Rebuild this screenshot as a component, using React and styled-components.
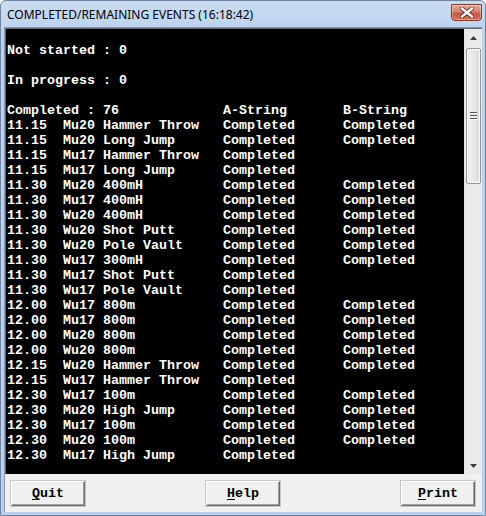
import React from 'react';
import styled, { createGlobalStyle } from 'styled-components';

const rows = [
  ['11.15', 'Mu20 Hammer Throw', 'Completed', 'Completed'],
  ['11.15', 'Mu20 Long Jump', 'Completed', 'Completed'],
  ['11.15', 'Mu17 Hammer Throw', 'Completed', ''],
  ['11.15', 'Mu17 Long Jump', 'Completed', ''],
  ['11.30', 'Mu20 400mH', 'Completed', 'Completed'],
  ['11.30', 'Mu17 400mH', 'Completed', 'Completed'],
  ['11.30', 'Wu20 400mH', 'Completed', 'Completed'],
  ['11.30', 'Wu20 Shot Putt', 'Completed', 'Completed'],
  ['11.30', 'Wu20 Pole Vault', 'Completed', 'Completed'],
  ['11.30', 'Wu17 300mH', 'Completed', 'Completed'],
  ['11.30', 'Mu17 Shot Putt', 'Completed', ''],
  ['11.30', 'Wu17 Pole Vault', 'Completed', ''],
  ['12.00', 'Wu17 800m', 'Completed', 'Completed'],
  ['12.00', 'Mu17 800m', 'Completed', 'Completed'],
  ['12.00', 'Mu20 800m', 'Completed', 'Completed'],
  ['12.00', 'Wu20 800m', 'Completed', 'Completed'],
  ['12.15', 'Wu20 Hammer Throw', 'Completed', 'Completed'],
  ['12.15', 'Wu17 Hammer Throw', 'Completed', ''],
  ['12.30', 'Wu17 100m', 'Completed', 'Completed'],
  ['12.30', 'Mu20 High Jump', 'Completed', 'Completed'],
  ['12.30', 'Mu17 100m', 'Completed', 'Completed'],
  ['12.30', 'Mu20 100m', 'Completed', 'Completed'],
  ['12.30', 'Mu17 High Jump', 'Completed', ''],
];

const App = () => {
  return (
    <>
      <GlobalStyle />
      <Window>
        <TitleBar>
          <Title>COMPLETED/REMAINING EVENTS (16:18:42)</Title>
          <CloseButton>
            <svg width="14" height="11" viewBox="0 0 14 11">
              <path d="M2 1.5 L12 9.5 M12 1.5 L2 9.5" stroke="#5a1a1a" strokeWidth="4" strokeLinecap="square" />
              <path d="M2 1.5 L12 9.5 M12 1.5 L2 9.5" stroke="#fff" strokeWidth="2.4" strokeLinecap="square" />
            </svg>
          </CloseButton>
        </TitleBar>
        <Client>
          <Console>
            <Output>
              <Line />
              <Line>Not started : 0</Line>
              <Line />
              <Line>In progress : 0</Line>
              <Line />
              <Line>
                <Cell $w={216}>Completed : 76</Cell>
                <Cell $w={120}>A-String</Cell>
                <Cell>B-String</Cell>
              </Line>
              {rows.map((r, i) => (
                <Line key={i}>
                  <Cell $w={56}>{r[0]}</Cell>
                  <Cell $w={160}>{r[1]}</Cell>
                  <Cell $w={120}>{r[2]}</Cell>
                  <Cell>{r[3]}</Cell>
                </Line>
              ))}
            </Output>
            <ScrollBar>
              <Arrow>
                <svg width="7" height="4" viewBox="0 0 7 4"><path d="M0 4 L3.5 0 L7 4 Z" fill="#3c3c3c" /></svg>
              </Arrow>
              <Track>
                <Thumb>
                  <Grip />
                  <Grip />
                  <Grip />
                </Thumb>
              </Track>
              <Arrow>
                <svg width="7" height="4" viewBox="0 0 7 4"><path d="M0 0 L3.5 4 L7 0 Z" fill="#3c3c3c" /></svg>
              </Arrow>
            </ScrollBar>
          </Console>
          <ButtonBar>
            <Button><u>Q</u>uit</Button>
            <Button><u>H</u>elp</Button>
            <Button><u>P</u>rint</Button>
          </ButtonBar>
        </Client>
      </Window>
    </>
  );
};
export default App;

const GlobalStyle = createGlobalStyle`
  html, body {
    margin: 0;
    padding: 0;
    background: #fff;
  }
`;

const Window = styled.div`
  width: 486px;
  height: 516px;
  box-sizing: border-box;
  display: flex;
  flex-direction: column;
  background: linear-gradient(to bottom, #c9dcf2 0px, #bcd3ee 30px, #b9d1ec 100%);
  border: 1px solid #6e85a3;
  border-radius: 6px 6px 0 0;
  padding: 0 3px 3px 3px;
  overflow: hidden;
`;

const TitleBar = styled.div`
  height: 26px;
  display: flex;
  align-items: center;
  justify-content: space-between;
  flex-shrink: 0;
`;

const Title = styled.div`
  font-family: "Noto Sans", "Open Sans", sans-serif;
  font-size: 12px;
  color: #000;
  padding-left: 3px;
  padding-top: 1px;
`;

const CloseButton = styled.div`
  width: 31px;
  height: 17px;
  box-sizing: border-box;
  margin-top: -4px;
  display: flex;
  align-items: center;
  justify-content: center;
  border: 1px solid #7a3a3a;
  border-radius: 0 0 4px 4px;
  background: linear-gradient(to bottom, #e8a99a 0%, #d77e6c 45%, #c75846 55%, #cf6e5a 100%);
  box-shadow: inset 0 0 0 1px rgba(255, 255, 255, 0.35);
`;

const Client = styled.div`
  flex: 1;
  display: flex;
  flex-direction: column;
  background: #f0f0f0;
  border-top: 1px solid #8296b0;
  border-left: 1px solid #8296b0;
`;

const Console = styled.div`
  height: 446px;
  display: flex;
  background: #000;
  border-top: 1px solid #696969;
  border-left: 1px solid #696969;
  box-sizing: border-box;
`;

const Output = styled.div`
  flex: 1;
  padding: 0 0 0 1px;
  margin-top: -1px;
  overflow: hidden;
`;

const Line = styled.div`
  height: 15px;
  display: flex;
  white-space: pre;
  font-family: "Liberation Mono", "DejaVu Sans Mono", monospace;
  font-weight: bold;
  font-size: 13.333px;
  line-height: 15px;
  color: #fff;
`;

const Cell = styled.span`
  width: ${p => (p.$w ? `${p.$w}px` : 'auto')};
  flex-shrink: 0;
`;

const ScrollBar = styled.div`
  width: 17px;
  display: flex;
  flex-direction: column;
  background: #eaeaea;
  border-left: 1px solid #e3e3e3;
`;

const Arrow = styled.div`
  height: 17px;
  display: flex;
  align-items: center;
  justify-content: center;
  flex-shrink: 0;
`;

const Track = styled.div`
  flex: 1;
  padding: 2px 1px 0 1px;
`;

const Thumb = styled.div`
  height: 136px;
  box-sizing: border-box;
  border: 1px solid #979797;
  border-radius: 2px;
  background: linear-gradient(to right, #f3f3f3 0%, #e8e8e8 50%, #d9d9d9 100%);
  box-shadow: inset 0 0 0 1px #fbfbfb;
  display: flex;
  flex-direction: column;
  align-items: center;
  justify-content: center;
  gap: 1px;
`;

const Grip = styled.div`
  width: 7px;
  height: 1px;
  background: #555;
  border-bottom: 1px solid #f6f6f6;
`;

const ButtonBar = styled.div`
  flex: 1;
  display: flex;
  align-items: flex-start;
  justify-content: space-between;
  padding: 7px 7px 0 6px;
`;

const Button = styled.div`
  width: 74px;
  height: 25px;
  box-sizing: border-box;
  display: flex;
  align-items: center;
  justify-content: center;
  background: #f0f0f0;
  border-top: 1px solid #fff;
  border-left: 1px solid #fff;
  border-right: 1px solid #696969;
  border-bottom: 1px solid #696969;
  box-shadow: inset -1px -1px 0 #a0a0a0, 0 0 0 1px #c8c8c8;
  font-family: "Liberation Mono", "DejaVu Sans Mono", monospace;
  font-weight: bold;
  font-size: 13.333px;
  color: #000;
  white-space: pre;

  u {
    text-underline-offset: 2px;
  }
`;
